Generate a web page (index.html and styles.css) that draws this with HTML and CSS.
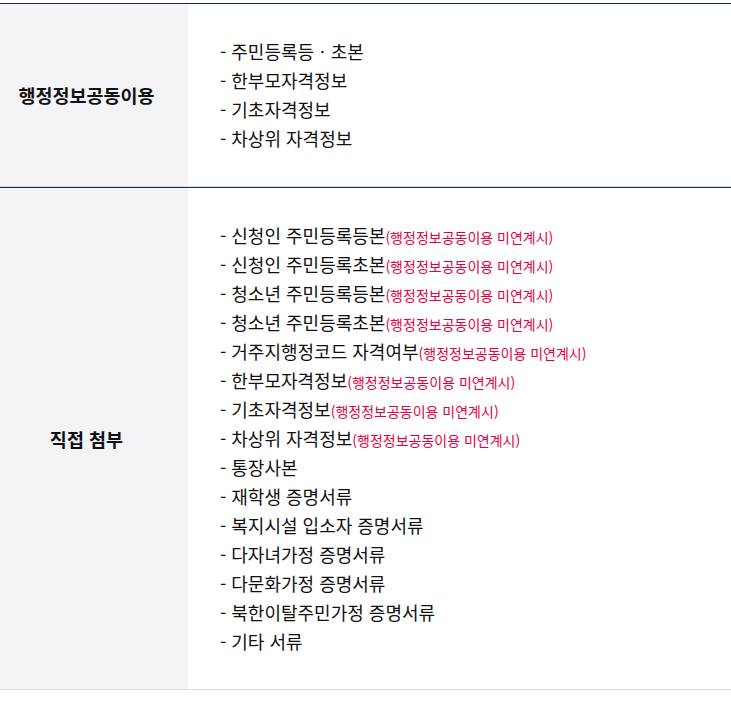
FILE: index.html
```html
<!DOCTYPE html>
<html lang="ko">
<head>
  <meta charset="UTF-8" />
  <meta name="viewport" content="width=device-width, initial-scale=1.0" />
  <title>제출서류</title>
  <link rel="stylesheet" href="styles.css">
</head>
<body>
  <table class="doc-table">
    <tr>
      <th>행정정보공동이용</th>
      <td>
        <ul class="doc-list">
          <li>- 주민등록등ㆍ초본</li>
          <li>- 한부모자격정보</li>
          <li>- 기초자격정보</li>
          <li>- 차상위 자격정보</li>
        </ul>
      </td>
    </tr>
  </table>

  <table class="doc-table">
    <tr>
      <th>직접 첨부</th>
      <td>
        <ul class="doc-list">
          <li>- 신청인 주민등록등본<span class="note">(행정정보공동이용 미연계시)</span></li>
          <li>- 신청인 주민등록초본<span class="note">(행정정보공동이용 미연계시)</span></li>
          <li>- 청소년 주민등록등본<span class="note">(행정정보공동이용 미연계시)</span></li>
          <li>- 청소년 주민등록초본<span class="note">(행정정보공동이용 미연계시)</span></li>
          <li>- 거주지행정코드 자격여부<span class="note">(행정정보공동이용 미연계시)</span></li>
          <li>- 한부모자격정보<span class="note">(행정정보공동이용 미연계시)</span></li>
          <li>- 기초자격정보<span class="note">(행정정보공동이용 미연계시)</span></li>
          <li>- 차상위 자격정보<span class="note">(행정정보공동이용 미연계시)</span></li>
          <li>- 통장사본</li>
          <li>- 재학생 증명서류</li>
          <li>- 복지시설 입소자 증명서류</li>
          <li>- 다자녀가정 증명서류</li>
          <li>- 다문화가정 증명서류</li>
          <li>- 북한이탈주민가정 증명서류</li>
          <li>- 기타 서류</li>
        </ul>
      </td>
    </tr>
  </table>
</body>
</html>
```

FILE: styles.css
```css
:root {
  --navy: #0b2e5e;
  --line: #dddddd;
  --th-bg: #f4f4f6;
  --text: #111;
  --note: #e4003f;
}
body {
  margin: 0;
  padding-top: 3px;
  font-family: "Noto Sans CJK KR", "Noto Sans", sans-serif;
  color: var(--text);
  background: #fff;
}
.doc-table {
  width: 100%;
  border-collapse: collapse;
  border-top: 1px solid var(--navy);
  border-bottom: 1px solid var(--line);
}
.doc-table th {
  width: 173px;
  background: var(--th-bg);
  font-size: 18.5px;
  font-weight: bold;
  text-align: center;
  vertical-align: middle;
  padding: 0 15px 0 0;
}
.doc-table td {
  padding: 33px 0 33px 32px;
  vertical-align: middle;
}
.doc-list {
  list-style: none;
  margin: 0;
  padding: 0;
}
.doc-list li {
  font-size: 18px;
  line-height: 29px;
}
.note {
  font-size: 14px;
  line-height: 1;
  color: var(--note);
}
```
